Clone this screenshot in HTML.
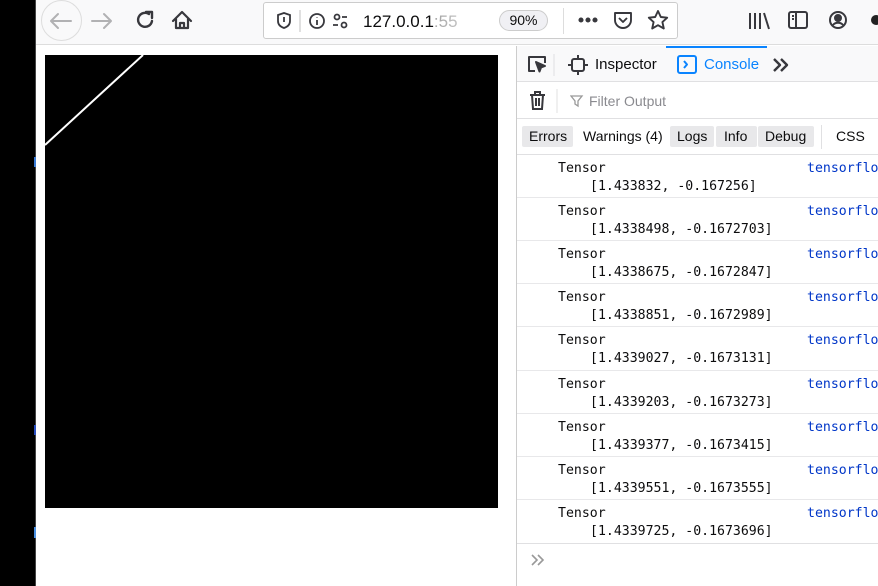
<!DOCTYPE html>
<html><head><style>
*{margin:0;padding:0;box-sizing:border-box}
body{width:878px;height:586px;overflow:hidden;background:#fff;font-family:"Liberation Sans",sans-serif;position:relative}
.a{position:absolute}
.mono{font-family:"DejaVu Sans Mono","Liberation Mono",monospace;font-size:13.2px;color:#0c0c0d}
.mono .t{top:6px}.mono .v{top:24px}
</style></head><body>
<div class="a" style="left:0;top:0;width:36px;height:586px;background:#000"></div>
<div class="a" style="left:35px;top:0;width:1px;height:586px;background:#444"></div>
<div class="a" style="left:34px;top:157px;width:2px;height:10px;background:#3a7bd5"></div>
<div class="a" style="left:34px;top:425px;width:2px;height:10px;background:#2a4fc0"></div>
<div class="a" style="left:34px;top:527px;width:2px;height:11px;background:#4a90e2"></div>
<div class="a" style="left:36px;top:0;width:842px;height:45px;background:#f9f9fa;border-bottom:1px solid #ddd"></div>
<div class="a" style="left:41px;top:0;width:41px;height:41px;border:1px solid #ddd;border-radius:50%"></div>
<svg class="a" style="left:36px;top:0" width="180" height="44" fill="none" stroke-linecap="round" stroke-linejoin="round">
<path d="M15 21h20M22 14l-7 7 7 7" stroke="#b1b1b3" stroke-width="2"/>
<path d="M56 21h19M68 14l7 7-7 7" stroke="#b1b1b3" stroke-width="2"/>
<path d="M113 14a7 7 0 1 0 3 7" stroke="#38383d" stroke-width="2.4"/><path d="M110 12h6v6" stroke="#38383d" stroke-width="2.4"/>
<path d="M137 21l9-9 9 9M140 19v9h12v-9M144 28v-5h4v5" stroke="#38383d" stroke-width="2.2"/>
</svg>
<div class="a" style="left:263px;top:2px;width:415px;height:37px;background:#fff;border:1px solid #ccc;border-radius:3px"></div>
<svg class="a" style="left:270px;top:8px" width="100" height="26" fill="none" stroke="#38383d" stroke-width="1.8">
<path d="M8 7l6-2 6 2v6c0 4-3 6-6 7-3-1-6-3-6-7z"/><path d="M14 9v5"/>
<line x1="30" y1="2" x2="30" y2="24" stroke="#ddd"/>
<circle cx="47" cy="13" r="7"/><path d="M47 12v5M47 9v.5"/>
<circle cx="67" cy="9" r="2.5"/><path d="M72 9h5M63 17h5"/><circle cx="74" cy="17" r="2.5"/>
</svg>
<div class="a" style="left:363px;top:12px;font-size:17px;color:#0c0c0d">127.0.0.1<span style="color:#aaa">:55</span></div>
<div class="a" style="left:440px;top:6px;width:60px;height:30px;background:linear-gradient(90deg,rgba(255,255,255,0),#fff)"></div>
<div class="a" style="left:499px;top:10px;width:49px;height:21px;border:1px solid #ccc;border-radius:11px;background:#f0f0f4;font-size:14px;text-align:center;line-height:19px;color:#0c0c0d">90%</div>
<div class="a" style="left:563px;top:8px;width:1px;height:26px;background:#ddd"></div>
<svg class="a" style="left:575px;top:8px" width="100" height="26" fill="none" stroke="#38383d" stroke-width="1.9" stroke-linejoin="round">
<circle cx="6" cy="12" r="1.6" fill="#38383d"/><circle cx="13" cy="12" r="1.6" fill="#38383d"/><circle cx="20" cy="12" r="1.6" fill="#38383d"/>
<path d="M40 5h16v7a8 8 0 0 1-16 0z"/><path d="M44 10l4 4 4-4"/>
<path d="M83 3l2.8 6 6.4.7-4.8 4.4 1.4 6.4-5.8-3.3-5.8 3.3 1.4-6.4-4.8-4.4 6.4-.7z"/>
</svg>
<svg class="a" style="left:745px;top:8px" width="133" height="26" fill="none" stroke="#38383d" stroke-width="2">
<path d="M5 5v16M10 5v16M15 5v16M19 5l5 16"/>
<rect x="44" y="4" width="18" height="16" rx="2"/><path d="M51 4v16M47 8h2M47 11h2"/>
<circle cx="93" cy="12" r="8"/><circle cx="93" cy="10" r="3" fill="#38383d"/><path d="M88 17a6 5 0 0 1 10 0"/>
<circle cx="131" cy="12" r="5" fill="#222" stroke="none"/>
</svg>
<div class="a" style="left:45px;top:55px;width:453px;height:453px;background:#000"></div>
<svg class="a" style="left:45px;top:55px" width="453" height="453"><line x1="0" y1="90" x2="98" y2="0" stroke="#fff" stroke-width="2"/></svg>
<div class="a" style="left:516px;top:46px;width:1px;height:540px;background:#ccc"></div>
<div class="a" style="left:517px;top:46px;width:361px;height:36px;background:#f9f9fa;border-bottom:1px solid #e0e0e2"></div>
<div class="a" style="left:666px;top:46px;width:101px;height:2px;background:#0a84ff"></div>
<svg class="a" style="left:524px;top:52px" width="270" height="26" fill="none" stroke-width="2" stroke-linejoin="round">
<path d="M11 19H5V5h16v6" stroke="#38383d"/><path d="M12 10l9 4-4 1.5-1.5 4z" stroke="#38383d" fill="#38383d"/>
<line x1="30" y1="2" x2="30" y2="24" stroke="#e0e0e2" stroke-width="1"/>
<rect x="48" y="7" width="12" height="12" rx="2" stroke="#38383d"/><path d="M54 3v4M54 19v4M44 13h4M60 13h4" stroke="#38383d"/>
<rect x="154" y="4" width="18" height="17" rx="2" stroke="#0a84ff"/><path d="M160 9l3 3.5-3 3.5" stroke="#0a84ff"/>
<path d="M250 7l6 6-6 6M257 7l6 6-6 6" stroke="#38383d" stroke-width="2.4"/>
</svg>
<div class="a" style="left:595px;top:56px;font-size:15px;color:#0c0c0d">Inspector</div>
<div class="a" style="left:704px;top:56px;font-size:15px;color:#0a84ff">Console</div>
<div class="a" style="left:517px;top:83px;width:361px;height:36px;border-bottom:1px solid #e0e0e2"></div>
<svg class="a" style="left:526px;top:88px" width="40" height="26" fill="none" stroke="#38383d" stroke-width="2">
<path d="M4 7h15M9 7V4h5v3M6 7l1 14h9l1-14M10 10v8M13 10v8"/>
<line x1="31" y1="1" x2="31" y2="25" stroke="#e0e0e2" stroke-width="1"/>
</svg>
<svg class="a" style="left:570px;top:94px" width="14" height="14" fill="none" stroke="#999" stroke-width="1.3"><path d="M1 2h11l-4 5v5l-3-2V7z"/></svg>
<div class="a" style="left:589px;top:93px;font-size:14px;color:#8a8a8f">Filter Output</div>
<div class="a" style="left:517px;top:119px;width:361px;height:36px;border-bottom:1px solid #e0e0e2"></div>
<div class="a" style="left:522px;top:126px;height:21px;font-size:14px;color:#0c0c0d;line-height:21px">
<span class="a" style="left:0;width:51px;background:#e8e8ea;border-radius:2px;padding-left:7px">Errors</span>
<span class="a" style="left:61px;white-space:nowrap">Warnings (4)</span>
<span class="a" style="left:148px;width:44px;background:#e8e8ea;border-radius:2px;padding-left:7px">Logs</span>
<span class="a" style="left:194px;width:41px;background:#e8e8ea;border-radius:2px;padding-left:8px">Info</span>
<span class="a" style="left:236px;width:56px;background:#e8e8ea;border-radius:2px;padding-left:7px">Debug</span>
<span class="a" style="left:299px;width:1px;height:24px;top:-1px;background:#e0e0e2"></span>
<span class="a" style="left:314px">CSS</span>
</div>
<div class="a mono" style="left:517px;top:155px;width:361px">
<div style="height:43px;border-bottom:1px solid #e8e8ea;position:relative"><span class="a t" style="left:41px">Tensor</span><span class="a v" style="left:73px">[1.433832, -0.167256]</span><span class="a t" style="left:290px;color:#0036c8">tensorflo</span></div>
<div style="height:43px;border-bottom:1px solid #e8e8ea;position:relative"><span class="a t" style="left:41px">Tensor</span><span class="a v" style="left:73px">[1.4338498, -0.1672703]</span><span class="a t" style="left:290px;color:#0036c8">tensorflo</span></div>
<div style="height:43px;border-bottom:1px solid #e8e8ea;position:relative"><span class="a t" style="left:41px">Tensor</span><span class="a v" style="left:73px">[1.4338675, -0.1672847]</span><span class="a t" style="left:290px;color:#0036c8">tensorflo</span></div>
<div style="height:43px;border-bottom:1px solid #e8e8ea;position:relative"><span class="a t" style="left:41px">Tensor</span><span class="a v" style="left:73px">[1.4338851, -0.1672989]</span><span class="a t" style="left:290px;color:#0036c8">tensorflo</span></div>
<div style="height:44px;border-bottom:1px solid #e8e8ea;position:relative"><span class="a t" style="left:41px">Tensor</span><span class="a v" style="left:73px">[1.4339027, -0.1673131]</span><span class="a t" style="left:290px;color:#0036c8">tensorflo</span></div>
<div style="height:43px;border-bottom:1px solid #e8e8ea;position:relative"><span class="a t" style="left:41px">Tensor</span><span class="a v" style="left:73px">[1.4339203, -0.1673273]</span><span class="a t" style="left:290px;color:#0036c8">tensorflo</span></div>
<div style="height:43px;border-bottom:1px solid #e8e8ea;position:relative"><span class="a t" style="left:41px">Tensor</span><span class="a v" style="left:73px">[1.4339377, -0.1673415]</span><span class="a t" style="left:290px;color:#0036c8">tensorflo</span></div>
<div style="height:43px;border-bottom:1px solid #e8e8ea;position:relative"><span class="a t" style="left:41px">Tensor</span><span class="a v" style="left:73px">[1.4339551, -0.1673555]</span><span class="a t" style="left:290px;color:#0036c8">tensorflo</span></div>
<div style="height:44px;border-bottom:1px solid #e0e0e2;position:relative"><span class="a t" style="left:41px">Tensor</span><span class="a v" style="left:73px">[1.4339725, -0.1673696]</span><span class="a t" style="left:290px;color:#0036c8">tensorflo</span></div>
</div>
<svg class="a" style="left:530px;top:553px" width="16" height="14" fill="none" stroke="#999" stroke-width="1.6"><path d="M2 2l5 5-5 5M8 2l5 5-5 5"/></svg>
</body></html>
